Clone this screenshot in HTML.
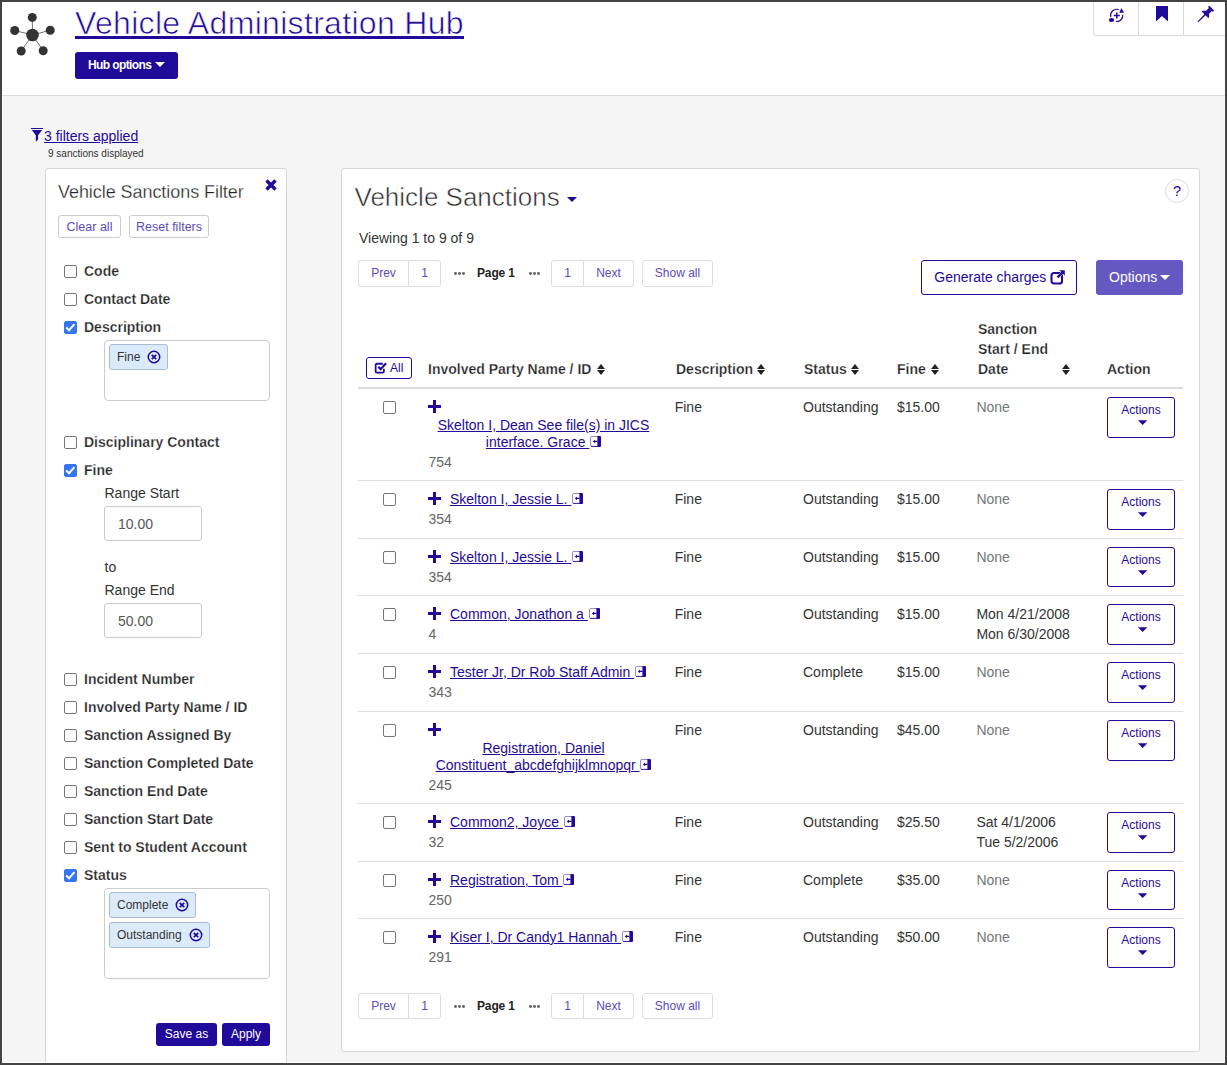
<!DOCTYPE html>
<html lang="en">
<head>
<meta charset="utf-8">
<title>Vehicle Administration Hub</title>
<style>
*{box-sizing:border-box;}
html,body{margin:0;padding:0;}
body{width:1227px;height:1065px;position:relative;overflow:hidden;background:#f5f5f5;font-family:"Liberation Sans",Arial,sans-serif;font-size:14px;color:#333;line-height:20px;}
a{color:#1f0a99;text-decoration:underline;}
.abs{position:absolute;}
#frame{position:absolute;left:0;top:0;width:1227px;height:1065px;border:2px solid #444;z-index:50;pointer-events:none;}
.ring{position:absolute;background:#fff;}
#header{position:absolute;left:0;top:0;width:1227px;height:96px;background:#fff;border-bottom:1px solid #dcdcdc;}
#title{position:absolute;left:75px;top:4px;font-size:32px;line-height:38px;letter-spacing:.32px;color:#1f0a99;white-space:nowrap;text-decoration:none;-webkit-text-stroke:.65px #fff;}
#title:after{content:"";position:absolute;left:0;right:0;top:32px;height:3px;background:#1f0a99;}
.btn-primary{position:absolute;background:#1f0a99;color:#fff;border-radius:3px;font-size:12px;text-align:center;white-space:nowrap;}
#hubopt{left:75px;top:52px;width:103px;height:27px;line-height:27px;font-weight:700;text-align:left;padding-left:13px;letter-spacing:-.6px;}
.caret{display:inline-block;width:0;height:0;border-left:5px solid transparent;border-right:5px solid transparent;border-top:5px solid currentColor;vertical-align:middle;}
#toolbar{position:absolute;left:1093px;top:0;width:134px;height:36px;border:1px solid #d8d8d8;border-radius:0 0 0 3px;background:#fff;}
#toolbar i{position:absolute;top:0;width:1px;height:35px;background:#d8d8d8;}
/* filter */
#flink{position:absolute;left:44px;top:126px;font-size:14px;line-height:20px;white-space:nowrap;}
#fsub{position:absolute;left:48px;top:147.500px;font-size:10px;line-height:12px;color:#333;white-space:nowrap;}
#fpanel{position:absolute;left:45px;top:168px;width:242px;height:910px;background:#fff;border:1px solid #d8d8d8;border-radius:3px;}
#ftitle{position:absolute;left:12px;top:11px;font-size:18px;line-height:24px;color:#222;white-space:nowrap;letter-spacing:-.06px;-webkit-text-stroke:.28px #fff;}
.sbtn{position:absolute;height:23px;line-height:22px;border:1px solid #ccc;border-radius:3px;background:#fff;color:#5a4bbf;font-size:12.500px;text-align:center;white-space:nowrap;}
.cb{position:absolute;left:18px;width:13px;height:13px;border:1px solid #767676;border-radius:2px;background:#fff;}
.cb.on{background:#3574f2;border-color:#3574f2;}
.cb.on:after{content:"";position:absolute;left:3.3px;top:0;width:4.8px;height:8.6px;border:solid #fff;border-width:0 2px 2px 0;transform:rotate(42deg);box-sizing:border-box;}
.fl{position:absolute;left:38px;font-weight:700;font-size:14px;line-height:20px;color:#222;white-space:nowrap;-webkit-text-stroke:.25px #fff;}
.tagbox{position:absolute;left:58px;width:166px;border:1px solid #ccc;border-radius:4px;background:#fff;}
.tag{position:absolute;left:4px;height:26px;line-height:24px;border:1px solid #a9bcd9;border-radius:3px;background:#dcebfb;color:#333;font-size:12px;padding-left:7px;white-space:nowrap;}
.tag svg{position:absolute;top:5px;right:6px;}
.rl{position:absolute;left:58.500px;font-size:14px;line-height:20px;color:#333;white-space:nowrap;}
.inp{position:absolute;left:58px;width:98px;height:35px;border:1px solid #ccc;border-radius:3px;background:#fff;font-size:14px;line-height:35px;padding-left:13px;color:#555;}
/* main */
#main{position:absolute;left:341px;top:168px;width:859px;height:884px;background:#fff;border:1px solid #d8d8d8;border-radius:3px;}
#mtitle{position:absolute;left:12.500px;top:10.800px;font-size:26px;line-height:34px;color:#2a2a2a;white-space:nowrap;letter-spacing:0;-webkit-text-stroke:.55px #fff;}
.pg{position:absolute;height:27px;font-size:12px;line-height:25px;color:#5a4bbf;white-space:nowrap;}
.pg span{position:absolute;top:0;height:var(--h);border:1px solid #ddd;background:#fff;text-align:center;}
.pg b{position:absolute;top:1px;color:#222;letter-spacing:-.15px;}
.pg em{position:absolute;top:12px;width:11px;height:3px;}
.pg em i{position:absolute;top:0;width:2.800px;height:2.800px;border-radius:50%;background:#666;}
.pg em i:nth-child(2){left:4.100px;}
.pg em i:nth-child(3){left:8.200px;}
.th{position:absolute;font-weight:700;font-size:14px;line-height:20px;color:#222;white-space:nowrap;-webkit-text-stroke:.25px #fff;}
.sort{display:inline-block;position:relative;width:8px;height:11px;margin-left:6px;vertical-align:-1px;}
.sort:before,.sort:after{content:"";position:absolute;left:0;border-left:4px solid transparent;border-right:4px solid transparent;}
.sort:before{top:0;border-bottom:5px solid #222;}
.sort:after{bottom:0;border-top:5px solid #222;}
.row{position:absolute;left:16px;width:825px;border-top:1px solid #ddd;}
.row .c{position:absolute;top:8px;font-size:14px;line-height:20px;color:#333;white-space:nowrap;}
.row .cb{left:25px;top:12px;}
.row .plus{position:absolute;left:70px;top:11px;width:13px;height:13px;}
.row .plus:before{content:"";position:absolute;left:0;top:5px;width:13px;height:3px;background:#1f0a99;}
.row .plus:after{content:"";position:absolute;left:5px;top:0;width:3px;height:13px;background:#1f0a99;}
.row .nm{position:absolute;font-size:14px;line-height:17px;white-space:nowrap;text-align:center;}
.row .id{position:absolute;left:70.500px;font-size:14px;line-height:20px;color:#666;}
.row .none{color:#777;}
.act{position:absolute;left:749px;top:8px;width:68px;height:41px;border:1px solid #1f0a99;border-radius:3px;background:#fff;color:#1f0a99;font-size:12px;line-height:14px;text-align:center;padding-top:5px;}
.act .caret{border:0;display:block;width:9.400px;height:4.800px;background:#1f0a99;clip-path:polygon(0 0,100% 0,50% 100%);margin:3.200px auto 0;transform:translateX(1.650px);}
.ext{display:inline-block;width:11px;height:11px;vertical-align:0;margin-left:.8px;}
</style>
</head>
<body>
<div id="header">
  <svg class="abs" style="left:8px;top:10px" width="50" height="50" viewBox="0 0 50 50">
    <g stroke="#333" stroke-width=".7">
      <line x1="24.5" y1="25" x2="24.3" y2="7.4"/><line x1="24.5" y1="25" x2="6.7" y2="20.5"/><line x1="24.5" y1="25" x2="42.2" y2="20.2"/><line x1="24.5" y1="25" x2="13.2" y2="41"/><line x1="24.5" y1="25" x2="35.2" y2="40.7"/>
    </g>
    <g fill="#333">
      <circle cx="24.5" cy="25" r="6.3"/><circle cx="24.3" cy="7.4" r="4.5"/><circle cx="6.7" cy="20.5" r="4.5"/><circle cx="42.2" cy="20.2" r="4.5"/><circle cx="13.2" cy="41" r="4.5"/><circle cx="35.2" cy="40.7" r="4.5"/>
    </g>
  </svg>
  <a id="title">Vehicle Administration Hub</a>
  <div id="hubopt" class="btn-primary">Hub options <span class="caret" style="position:absolute;left:79.500px;top:10px"></span></div>
  <div id="toolbar"><i style="left:44px"></i><i style="left:89px"></i>
<svg class="abs" style="left:6px;top:1.3px" width="32" height="26" viewBox="0 0 32 26"><path d="M10.81 14.98A6.1 6.1 0 0 1 18.59 7.60M22.74 12.55A6.1 6.1 0 0 1 15.85 19.44" fill="none" stroke="#1f0a99" stroke-width="1.2"/><path d="M21.5 6L24 10.700H19.200Z" fill="#1f0a99"/><ellipse cx="11.500" cy="18" rx="2.700" ry="2" fill="#1f0a99"/><path d="M13.800 13.500H19.800M16.800 10.500V16.500" stroke="#1f0a99" stroke-width="1.500" fill="none"/></svg>
<svg class="abs" style="left:61.700px;top:5px" width="12" height="16" viewBox="0 0 12 16"><path d="M0 0H12V15.500L6 10L0 15.500Z" fill="#1f0a99"/></svg>
<svg class="abs" style="left:99px;top:1px" width="26" height="24" viewBox="0 0 26 24"><g transform="translate(5.100 19.600) rotate(-44.600)" fill="#1f0a99"><path d="M-.300 -.500L11 -.800V.800L-.300 .500Z"/><path d="M9.700 -4.600H10.900L13.400 -2.100V2.100L10.900 4.600H9.700Z"/><rect x="13" y="-2.100" width="4.600" height="4.200"/><rect x="17.300" y="-3.400" width="1.800" height="6.800" rx=".5"/></g></svg></div>
</div>

<svg class="abs" style="left:30px;top:127px" width="14" height="16" viewBox="0 0 14 16"><path d="M1 .9H13V2H1Z M1.800 3.100H12.200L8.100 8.300V12.600L5.800 14.700V8.300Z" fill="#1f0a99"/></svg>
<a id="flink">3 filters applied</a>
<div id="fsub">9 sanctions displayed</div>

<div id="fpanel">
  <div id="ftitle">Vehicle Sanctions Filter</div>
  <svg class="abs" style="left:218.800px;top:10px" width="12" height="12" viewBox="0 0 12 12"><path d="M1.5 1.5L10.5 10.5M10.5 1.5L1.5 10.5" stroke="#1f0a99" stroke-width="3.400" fill="none"/></svg>
  <div class="sbtn" style="left:12px;top:46px;width:63px">Clear all</div>
  <div class="sbtn" style="left:83px;top:46px;width:80px">Reset filters</div>
  <div class="cb" style="top:96px"></div><div class="fl" style="top:92px">Code</div>
  <div class="cb" style="top:124px"></div><div class="fl" style="top:120px">Contact Date</div>
  <div class="cb on" style="top:152px"></div><div class="fl" style="top:148px">Description</div>
  <div class="cb" style="top:267px"></div><div class="fl" style="top:263px">Disciplinary Contact</div>
  <div class="cb on" style="top:295px"></div><div class="fl" style="top:291px">Fine</div>
  <div class="cb" style="top:504px"></div><div class="fl" style="top:500px">Incident Number</div>
  <div class="cb" style="top:532px"></div><div class="fl" style="top:528px">Involved Party Name / ID</div>
  <div class="cb" style="top:560px"></div><div class="fl" style="top:556px">Sanction Assigned By</div>
  <div class="cb" style="top:588px"></div><div class="fl" style="top:584px">Sanction Completed Date</div>
  <div class="cb" style="top:616px"></div><div class="fl" style="top:612px">Sanction End Date</div>
  <div class="cb" style="top:644px"></div><div class="fl" style="top:640px">Sanction Start Date</div>
  <div class="cb" style="top:672px"></div><div class="fl" style="top:668px">Sent to Student Account</div>
  <div class="cb on" style="top:700px"></div><div class="fl" style="top:696px">Status</div>
  <div class="tagbox" style="top:171px;height:61px"><div class="tag" style="top:3px;width:59px">Fine<svg class="abs" style="left:37px;top:4.5px" width="14" height="14" viewBox="0 0 14 14"><circle cx="7" cy="7" r="5.7" fill="none" stroke="#1f0a99" stroke-width="1.5"/><path d="M4.8 4.8L9.2 9.2M9.2 4.8L4.8 9.2" stroke="#1f0a99" stroke-width="1.7" fill="none"/></svg></div></div>
  <div class="rl" style="top:314px">Range Start</div>
  <div class="inp" style="top:337px">10.00</div>
  <div class="rl" style="top:388px">to</div>
  <div class="rl" style="top:411px">Range End</div>
  <div class="inp" style="top:434px">50.00</div>
  <div class="tagbox" style="top:719px;height:91px"><div class="tag" style="top:3px;width:87px">Complete<svg class="abs" style="left:65px;top:4.5px" width="14" height="14" viewBox="0 0 14 14"><circle cx="7" cy="7" r="5.7" fill="none" stroke="#1f0a99" stroke-width="1.5"/><path d="M4.8 4.8L9.2 9.2M9.2 4.8L4.8 9.2" stroke="#1f0a99" stroke-width="1.7" fill="none"/></svg></div><div class="tag" style="top:33px;width:101px">Outstanding<svg class="abs" style="left:79px;top:4.5px" width="14" height="14" viewBox="0 0 14 14"><circle cx="7" cy="7" r="5.7" fill="none" stroke="#1f0a99" stroke-width="1.5"/><path d="M4.8 4.8L9.2 9.2M9.2 4.8L4.8 9.2" stroke="#1f0a99" stroke-width="1.7" fill="none"/></svg></div></div>
  <div class="btn-primary" style="left:110px;top:854px;width:61px;height:23px;line-height:22px">Save as</div>
  <div class="btn-primary" style="left:176px;top:854px;width:48px;height:23px;line-height:22px">Apply</div>
</div>

<div id="main">
  <div id="mtitle">Vehicle Sanctions</div>
  <span class="caret abs" style="left:224.5px;top:28px;color:#1f0a99"></span>
  <div class="abs" style="left:823px;top:10px;width:24px;height:24px;border:1px solid #ddd;border-radius:50%;text-align:center;line-height:23px;font-size:14.500px;color:#1f0a99">?</div>
  <div class="abs" style="left:17px;top:59px;white-space:nowrap;color:#333">Viewing 1 to 9 of 9</div>
  <div class="pg" style="left:16px;top:91px;width:360px;--h:27px"><span style="left:0;width:51px;border-radius:3px 0 0 3px">Prev</span><span style="left:50px;width:33px;border-radius:0 3px 3px 0">1</span><em style="left:96px"><i></i><i></i><i></i></em><b style="left:119px">Page 1</b><em style="left:171.29999999999995px"><i></i><i></i><i></i></em><span style="left:193px;width:33px;border-radius:3px 0 0 3px">1</span><span style="left:225px;width:51px;border-radius:0 3px 3px 0">Next</span><span style="left:284px;width:71px;border-radius:3px">Show all</span></div>
  <div class="pg" style="left:16px;top:824px;width:360px;--h:26px"><span style="left:0;width:51px;border-radius:3px 0 0 3px">Prev</span><span style="left:50px;width:33px;border-radius:0 3px 3px 0">1</span><em style="left:96px"><i></i><i></i><i></i></em><b style="left:119px">Page 1</b><em style="left:171.29999999999995px"><i></i><i></i><i></i></em><span style="left:193px;width:33px;border-radius:3px 0 0 3px">1</span><span style="left:225px;width:51px;border-radius:0 3px 3px 0">Next</span><span style="left:284px;width:71px;border-radius:3px">Show all</span></div>
  <div class="abs" style="left:579px;top:91px;width:156px;height:35px;border:1px solid #1f0a99;border-radius:3px;color:#1f0a99;font-size:14px;line-height:33px;padding-left:12.300px;white-space:nowrap">Generate charges<svg class="abs" style="left:127.500px;top:7.500px" width="16" height="16" viewBox="0 0 16 16"><rect x="1.500" y="4" width="10.500" height="10.500" rx="2.300" fill="none" stroke="#1f0a99" stroke-width="2.100"/><path d="M9.300 1.200H14.800V6.700L12.900 4.800L8.400 9.300L6.700 7.600L11.200 3.100Z" fill="#1f0a99" stroke="#fff" stroke-width=".9" paint-order="stroke"/></svg></div>
  <div class="abs" style="left:754px;top:91px;width:87px;height:35px;background:#6558c3;border-radius:3px;color:#fff;font-size:14px;line-height:35px;padding-left:13px;white-space:nowrap">Options<span class="caret abs" style="left:64px;top:14.500px"></span></div>
  <div class="abs" style="left:24px;top:188px;width:46px;height:22px;border:1px solid #1f0a99;border-radius:3px;color:#1f0a99;font-size:12px;line-height:20px;padding-left:23px">All<svg class="abs" style="left:7px;top:3px" width="14.300" height="13.200" viewBox="0 0 13 12"><path d="M9 7v2.500a1 1 0 0 1-1 1H2.500a1 1 0 0 1-1-1V3.500a1 1 0 0 1 1-1H8" fill="none" stroke="#1f0a99" stroke-width="1.6"/><path d="M4 5.200l2 2.200 5-5.400" fill="none" stroke="#1f0a99" stroke-width="2"/></svg></div>
  <div class="th" style="left:86px;top:190px">Involved Party Name / ID</div><span class="sort" style="position:absolute;left:254.5px;top:195px;margin:0"></span>
  <div class="th" style="left:334px;top:190px">Description</div><span class="sort" style="position:absolute;left:415.20000000000005px;top:195px;margin:0"></span>
  <div class="th" style="left:462px;top:190px">Status</div><span class="sort" style="position:absolute;left:509px;top:195px;margin:0"></span>
  <div class="th" style="left:555px;top:190px">Fine</div><span class="sort" style="position:absolute;left:588.5px;top:195px;margin:0"></span>
  <div class="th" style="left:636px;top:150px">Sanction</div>
  <div class="th" style="left:636px;top:170px">Start / End</div>
  <div class="th" style="left:636px;top:190px">Date</div><span class="sort" style="position:absolute;left:719.5px;top:195px;margin:0"></span>
  <div class="th" style="left:765px;top:190px">Action</div>
  <div class="abs" style="left:16px;top:218px;width:825px;height:2px;background:#ddd"></div>
  <div class="row" style="top:219px;border-top-color:transparent;"><div class="cb"></div><div class="plus"></div><div class="nm" style="left:70px;top:28px;width:231px"><a>Skelton I, Dean See file(s) in JICS<br>interface. Grace </a><svg class="ext" viewBox="0 0 11 11"><rect x=".5" y=".5" width="10" height="10" rx="1.2" fill="#fff" stroke="#1f0a99" stroke-width=".8" stroke-opacity=".6"/><path d="M7.400 0H9.800A1.200 1.200 0 0 1 11 1.200V9.800A1.200 1.200 0 0 1 9.800 11H7.400Z" fill="#1f0a99"/><path d="M2.800 5.400L5.100 3.500V4.800H7.500V6H5.100V7.300Z" fill="#1f0a99"/><path d="M1 10.400H10" stroke="#1f0a99" stroke-width=".8"/></svg></div><div class="id" style="top:63px">754</div><div class="c" style="left:316.7px">Fine</div><div class="c" style="left:445px">Outstanding</div><div class="c" style="left:539px">$15.00</div><div class="c none" style="left:618.4px">None</div><div class="act">Actions<span class="caret"></span></div></div>
  <div class="row" style="top:311px;"><div class="cb"></div><div class="plus"></div><div class="nm" style="left:92px;top:10px;text-align:left"><a>Skelton I, Jessie L. </a><svg class="ext" viewBox="0 0 11 11"><rect x=".5" y=".5" width="10" height="10" rx="1.2" fill="#fff" stroke="#1f0a99" stroke-width=".8" stroke-opacity=".6"/><path d="M7.400 0H9.800A1.200 1.200 0 0 1 11 1.200V9.800A1.200 1.200 0 0 1 9.800 11H7.400Z" fill="#1f0a99"/><path d="M2.800 5.400L5.100 3.500V4.800H7.500V6H5.100V7.300Z" fill="#1f0a99"/><path d="M1 10.400H10" stroke="#1f0a99" stroke-width=".8"/></svg></div><div class="id" style="top:28px">354</div><div class="c" style="left:316.7px">Fine</div><div class="c" style="left:445px">Outstanding</div><div class="c" style="left:539px">$15.00</div><div class="c none" style="left:618.4px">None</div><div class="act">Actions<span class="caret"></span></div></div>
  <div class="row" style="top:369px;"><div class="cb"></div><div class="plus"></div><div class="nm" style="left:92px;top:10px;text-align:left"><a>Skelton I, Jessie L. </a><svg class="ext" viewBox="0 0 11 11"><rect x=".5" y=".5" width="10" height="10" rx="1.2" fill="#fff" stroke="#1f0a99" stroke-width=".8" stroke-opacity=".6"/><path d="M7.400 0H9.800A1.200 1.200 0 0 1 11 1.200V9.800A1.200 1.200 0 0 1 9.800 11H7.400Z" fill="#1f0a99"/><path d="M2.800 5.400L5.100 3.500V4.800H7.500V6H5.100V7.300Z" fill="#1f0a99"/><path d="M1 10.400H10" stroke="#1f0a99" stroke-width=".8"/></svg></div><div class="id" style="top:28px">354</div><div class="c" style="left:316.7px">Fine</div><div class="c" style="left:445px">Outstanding</div><div class="c" style="left:539px">$15.00</div><div class="c none" style="left:618.4px">None</div><div class="act" style=height:40px>Actions<span class="caret"></span></div></div>
  <div class="row" style="top:426px;"><div class="cb"></div><div class="plus"></div><div class="nm" style="left:92px;top:10px;text-align:left"><a>Common, Jonathon a </a><svg class="ext" viewBox="0 0 11 11"><rect x=".5" y=".5" width="10" height="10" rx="1.2" fill="#fff" stroke="#1f0a99" stroke-width=".8" stroke-opacity=".6"/><path d="M7.400 0H9.800A1.200 1.200 0 0 1 11 1.200V9.800A1.200 1.200 0 0 1 9.800 11H7.400Z" fill="#1f0a99"/><path d="M2.800 5.400L5.100 3.500V4.800H7.500V6H5.100V7.300Z" fill="#1f0a99"/><path d="M1 10.400H10" stroke="#1f0a99" stroke-width=".8"/></svg></div><div class="id" style="top:28px">4</div><div class="c" style="left:316.7px">Fine</div><div class="c" style="left:445px">Outstanding</div><div class="c" style="left:539px">$15.00</div><div class="c" style="left:618.4px">Mon 4/21/2008<br>Mon 6/30/2008</div><div class="act">Actions<span class="caret"></span></div></div>
  <div class="row" style="top:484px;"><div class="cb"></div><div class="plus"></div><div class="nm" style="left:92px;top:10px;text-align:left"><a>Tester Jr, Dr Rob Staff Admin </a><svg class="ext" viewBox="0 0 11 11"><rect x=".5" y=".5" width="10" height="10" rx="1.2" fill="#fff" stroke="#1f0a99" stroke-width=".8" stroke-opacity=".6"/><path d="M7.400 0H9.800A1.200 1.200 0 0 1 11 1.200V9.800A1.200 1.200 0 0 1 9.800 11H7.400Z" fill="#1f0a99"/><path d="M2.800 5.400L5.100 3.500V4.800H7.500V6H5.100V7.300Z" fill="#1f0a99"/><path d="M1 10.400H10" stroke="#1f0a99" stroke-width=".8"/></svg></div><div class="id" style="top:28px">343</div><div class="c" style="left:316.7px">Fine</div><div class="c" style="left:445px">Complete</div><div class="c" style="left:539px">$15.00</div><div class="c none" style="left:618.4px">None</div><div class="act">Actions<span class="caret"></span></div></div>
  <div class="row" style="top:542px;"><div class="cb"></div><div class="plus"></div><div class="nm" style="left:70px;top:28px;width:231px"><a>Registration, Daniel<br>Constituent_abcdefghijklmnopqr </a><svg class="ext" viewBox="0 0 11 11"><rect x=".5" y=".5" width="10" height="10" rx="1.2" fill="#fff" stroke="#1f0a99" stroke-width=".8" stroke-opacity=".6"/><path d="M7.400 0H9.800A1.200 1.200 0 0 1 11 1.200V9.800A1.200 1.200 0 0 1 9.800 11H7.400Z" fill="#1f0a99"/><path d="M2.800 5.400L5.100 3.500V4.800H7.500V6H5.100V7.300Z" fill="#1f0a99"/><path d="M1 10.400H10" stroke="#1f0a99" stroke-width=".8"/></svg></div><div class="id" style="top:63px">245</div><div class="c" style="left:316.7px">Fine</div><div class="c" style="left:445px">Outstanding</div><div class="c" style="left:539px">$45.00</div><div class="c none" style="left:618.4px">None</div><div class="act">Actions<span class="caret"></span></div></div>
  <div class="row" style="top:634px;"><div class="cb"></div><div class="plus"></div><div class="nm" style="left:92px;top:10px;text-align:left"><a>Common2, Joyce </a><svg class="ext" viewBox="0 0 11 11"><rect x=".5" y=".5" width="10" height="10" rx="1.2" fill="#fff" stroke="#1f0a99" stroke-width=".8" stroke-opacity=".6"/><path d="M7.400 0H9.800A1.200 1.200 0 0 1 11 1.200V9.800A1.200 1.200 0 0 1 9.800 11H7.400Z" fill="#1f0a99"/><path d="M2.800 5.400L5.100 3.500V4.800H7.500V6H5.100V7.300Z" fill="#1f0a99"/><path d="M1 10.400H10" stroke="#1f0a99" stroke-width=".8"/></svg></div><div class="id" style="top:28px">32</div><div class="c" style="left:316.7px">Fine</div><div class="c" style="left:445px">Outstanding</div><div class="c" style="left:539px">$25.50</div><div class="c" style="left:618.4px">Sat 4/1/2006<br>Tue 5/2/2006</div><div class="act">Actions<span class="caret"></span></div></div>
  <div class="row" style="top:692px;"><div class="cb"></div><div class="plus"></div><div class="nm" style="left:92px;top:10px;text-align:left"><a>Registration, Tom </a><svg class="ext" viewBox="0 0 11 11"><rect x=".5" y=".5" width="10" height="10" rx="1.2" fill="#fff" stroke="#1f0a99" stroke-width=".8" stroke-opacity=".6"/><path d="M7.400 0H9.800A1.200 1.200 0 0 1 11 1.200V9.800A1.200 1.200 0 0 1 9.800 11H7.400Z" fill="#1f0a99"/><path d="M2.800 5.400L5.100 3.500V4.800H7.500V6H5.100V7.300Z" fill="#1f0a99"/><path d="M1 10.400H10" stroke="#1f0a99" stroke-width=".8"/></svg></div><div class="id" style="top:28px">250</div><div class="c" style="left:316.7px">Fine</div><div class="c" style="left:445px">Complete</div><div class="c" style="left:539px">$35.00</div><div class="c none" style="left:618.4px">None</div><div class="act" style=height:40px>Actions<span class="caret"></span></div></div>
  <div class="row" style="top:749px;"><div class="cb"></div><div class="plus"></div><div class="nm" style="left:92px;top:10px;text-align:left"><a>Kiser I, Dr Candy1 Hannah </a><svg class="ext" viewBox="0 0 11 11"><rect x=".5" y=".5" width="10" height="10" rx="1.2" fill="#fff" stroke="#1f0a99" stroke-width=".8" stroke-opacity=".6"/><path d="M7.400 0H9.800A1.200 1.200 0 0 1 11 1.200V9.800A1.200 1.200 0 0 1 9.800 11H7.400Z" fill="#1f0a99"/><path d="M2.800 5.400L5.100 3.500V4.800H7.500V6H5.100V7.300Z" fill="#1f0a99"/><path d="M1 10.400H10" stroke="#1f0a99" stroke-width=".8"/></svg></div><div class="id" style="top:28px">291</div><div class="c" style="left:316.7px">Fine</div><div class="c" style="left:445px">Outstanding</div><div class="c" style="left:539px">$50.00</div><div class="c none" style="left:618.4px">None</div><div class="act">Actions<span class="caret"></span></div></div>
</div>

<div class="ring" style="left:2px;top:96px;width:1px;height:967px"></div><div class="ring" style="left:1224px;top:96px;width:1px;height:967px"></div><div class="ring" style="left:2px;top:1062px;width:1223px;height:1px"></div>
<div id="frame"></div>
</body>
</html>
